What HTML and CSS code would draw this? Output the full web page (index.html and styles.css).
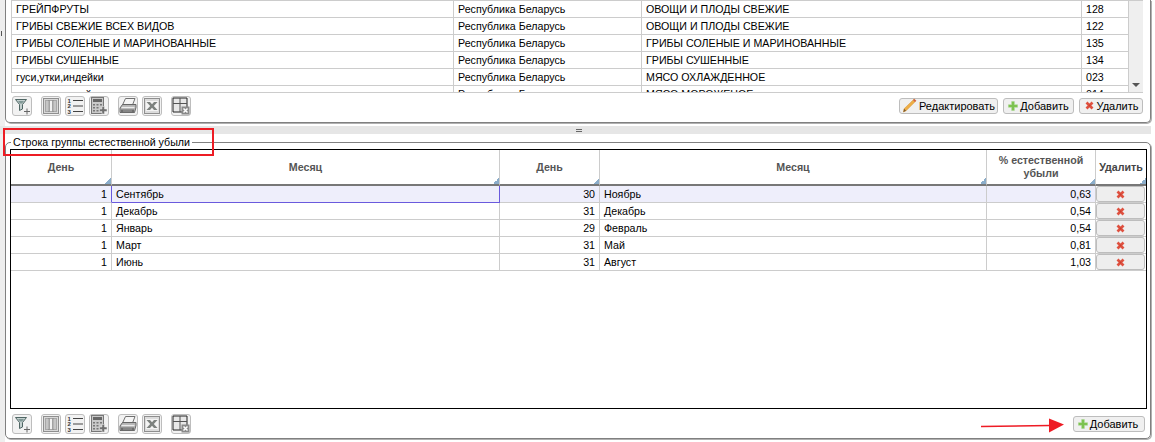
FILE: index.html
```html
<!DOCTYPE html>
<html lang="ru">
<head>
<meta charset="utf-8">
<title>Строка группы естественной убыли</title>
<link rel="stylesheet" href="styles.css">
</head>
<body>
<svg class="defs" xmlns="http://www.w3.org/2000/svg">
  <symbol id="i-filter" viewBox="0 0 18 18">
    <path d="M2.500 2.500h11l-4 5v4.500l-3 1.500V7.500z" fill="#c4d0cf" stroke="#4f6664" stroke-width="1"/>
    <path d="M5 4h6l-2 2.500H7z" fill="#7f9795"/>
    <path d="M11 14.500h6M14 11.500v6" stroke="#666" stroke-width="1"/>
  </symbol>
  <symbol id="i-cols" viewBox="0 0 18 18">
    <rect x="1.500" y="1.500" width="15" height="15" fill="#d9d9d9" stroke="#8f8f8f"/>
    <rect x="3.500" y="3.500" width="11" height="11" fill="#f2f2f2" stroke="#a8a8a8"/>
    <path d="M7 3.500v11M11 3.500v11" stroke="#6e6e6e" stroke-width="1.200"/>
    <rect x="4" y="4" width="2.500" height="10" fill="#c6c6c6"/>
    <rect x="11.500" y="4" width="2.500" height="10" fill="#c6c6c6"/>
  </symbol>
  <symbol id="i-list" viewBox="0 0 18 18">
    <text class="icon-digit" x="1.500" y="6">1</text>
    <text class="icon-digit" x="1.500" y="11">2</text>
    <text class="icon-digit" x="1.500" y="16.500">3</text>
    <path d="M7 3.500h10M7 9h10M7 14.500h10" stroke="#444" stroke-width="1"/>
  </symbol>
  <symbol id="i-calc" viewBox="0 0 18 18">
    <rect x="1.500" y="0.500" width="12" height="16" fill="#c9c9c9" stroke="#777"/>
    <rect x="3" y="2" width="9" height="3" fill="#666"/>
    <path d="M3 7h2v1.500H3zM6.500 7h2v1.500h-2zM10 7h2v1.500h-2zM3 10h2v1.500H3zM6.500 10h2v1.500h-2zM3 13h2v1.500H3zM6.500 13h2v1.500h-2z" fill="#777"/>
    <path d="M12 9.500h2.500V12H17v2.500h-2.500V17H12v-2.500H9.500V12H12z" fill="#6f6f6f" stroke="#eee" stroke-width=".5"/>
  </symbol>
  <symbol id="i-print" viewBox="0 0 18 18">
    <path d="M6.500 1.500h9.500l-2.500 6.500H3.500z" fill="#f5f5f5" stroke="#707070"/>
    <path d="M1 11l2.500-3.500h13.500v3l-1.500 5H1z" fill="#b5b5b5" stroke="#666"/>
    <path d="M2.500 10.500h13" stroke="#ececec" stroke-width="1.200"/>
    <rect x="2" y="12.500" width="13" height="3" fill="#6e6e6e"/>
    <rect x="4" y="13.500" width="9" height="1" fill="#9d9d9d"/>
  </symbol>
  <symbol id="i-excel" viewBox="0 0 18 18">
    <rect x="1.500" y="1.500" width="15" height="15" fill="#dcdcdc" stroke="#8f8f8f"/>
    <rect x="3" y="4" width="12" height="10" fill="#f4f4f4"/>
    <path d="M3.500 5h3.500l2 2.300L11 5h3.500l-3.700 4 3.700 4H11L9 10.700 7 13H3.500l3.700-4z" fill="#7d827f"/>
  </symbol>
  <symbol id="i-grid" viewBox="0 0 18 18">
    <path d="M1 1h14v14H1z" fill="#e8e8e8" stroke="#222" stroke-width="1"/>
    <path d="M1 6.500h14M8 1v14" stroke="#555" stroke-width="1"/>
    <rect x="9.500" y="9.500" width="8" height="8" fill="#8a8a8a"/>
    <path d="M11.500 11.500l4 4M15.500 11.500l-4 4" stroke="#fff" stroke-width="1.500"/>
  </symbol>
  <symbol id="i-pencil" viewBox="0 0 15 16">
    <path d="M1 15l.7-3.500L12.500 1 14.500 3 3.800 13.600z" fill="#eeae46" stroke="#d19030" stroke-width=".5"/>
    <path d="M12.500 1L14.500 3 13.300 4.200 11.300 2.200z" fill="#cf5a4a"/>
    <path d="M1 15l.7-3.500 2.100 2.100z" fill="#7a5a30"/>
  </symbol>
  <symbol id="i-plus" viewBox="0 0 11 11">
    <path d="M4 0.500h3v3.500h3.500v3H7v3.500H4V7H0.500V4H4z" fill="#7cc24e" stroke="#a5d68a" stroke-width=".5"/>
  </symbol>
  <symbol id="i-cross" viewBox="0 0 9 9">
    <path d="M1.500 1.500l6 6M7.500 1.500l-6 6" stroke="#df5140" stroke-width="2.700" stroke-linecap="butt" fill="none"/>
    <circle cx="4.500" cy="4.500" r="1" fill="#c9402f"/>
  </symbol>
</svg>

<div class="app">
  <div class="edge"><span class="edge-tick"></span></div>
  <main class="work">
    <section class="panel">
      <div class="grid-wrap">
        <div class="grid-clip">
          <table class="grid grid-top">
            <colgroup><col class="t1"><col class="t2"><col class="t3"><col class="t4"></colgroup>
            <tbody>
              <tr><td>ГРЕЙПФРУТЫ</td><td>Республика Беларусь</td><td>ОВОЩИ И ПЛОДЫ СВЕЖИЕ</td><td>128</td></tr>
              <tr><td>ГРИБЫ СВЕЖИЕ ВСЕХ ВИДОВ</td><td>Республика Беларусь</td><td>ОВОЩИ И ПЛОДЫ СВЕЖИЕ</td><td>122</td></tr>
              <tr><td>ГРИБЫ СОЛЕНЫЕ И МАРИНОВАННЫЕ</td><td>Республика Беларусь</td><td>ГРИБЫ СОЛЕНЫЕ И МАРИНОВАННЫЕ</td><td>135</td></tr>
              <tr><td>ГРИБЫ СУШЕННЫЕ</td><td>Республика Беларусь</td><td>ГРИБЫ СУШЕННЫЕ</td><td>134</td></tr>
              <tr><td>гуси,утки,индейки</td><td>Республика Беларусь</td><td>МЯСО ОХЛАЖДЕННОЕ</td><td>023</td></tr>
              <tr><td>утки домашней</td><td>Республика Беларусь</td><td>МЯСО МОРОЖЕНОЕ</td><td>014</td></tr>
            </tbody>
          </table>
        </div>
        <div class="scrollbar"><span class="scroll-down"></span></div>
      </div>
      <div class="toolbar">
        <div class="tools">
          <button class="tool"><svg class="tool-icon"><use href="#i-filter"/></svg></button>
          <button class="tool gap-l"><svg class="tool-icon"><use href="#i-cols"/></svg></button>
          <button class="tool"><svg class="tool-icon"><use href="#i-list"/></svg></button>
          <button class="tool"><svg class="tool-icon"><use href="#i-calc"/></svg></button>
          <button class="tool gap-l"><svg class="tool-icon"><use href="#i-print"/></svg></button>
          <button class="tool"><svg class="tool-icon"><use href="#i-excel"/></svg></button>
          <button class="tool gap-l"><svg class="tool-icon"><use href="#i-grid"/></svg></button>
        </div>
        <div class="actions">
          <button class="action action-edit"><svg class="a-pencil"><use href="#i-pencil"/></svg>Редактировать</button>
          <button class="action action-add"><svg class="a-plus"><use href="#i-plus"/></svg>Добавить</button>
          <button class="action action-del"><svg class="a-cross"><use href="#i-cross"/></svg>Удалить</button>
        </div>
      </div>
    </section>

    <div class="splitter"><span class="grip"></span></div>

    <fieldset class="group">
      <legend class="group-title">Строка группы естественной убыли</legend>
      <div class="detail">
        <table class="grid grid-detail">
          <colgroup><col class="d1"><col class="d2"><col class="d3"><col class="d4"><col class="d5"><col class="d6"></colgroup>
          <thead>
            <tr><th>День</th><th>Месяц</th><th>День</th><th>Месяц</th><th>% естественной убыли</th><th>Удалить</th></tr>
          </thead>
          <tbody>
            <tr class="selected"><td class="num focus-prev">1</td><td class="focus">Сентябрь</td><td class="num">30</td><td>Ноябрь</td><td class="num">0,63</td><td class="cell-btn"><button class="row-del"><svg class="a-cross"><use href="#i-cross"/></svg></button></td></tr>
            <tr><td class="num">1</td><td>Декабрь</td><td class="num">31</td><td>Декабрь</td><td class="num">0,54</td><td class="cell-btn"><button class="row-del"><svg class="a-cross"><use href="#i-cross"/></svg></button></td></tr>
            <tr><td class="num">1</td><td>Январь</td><td class="num">29</td><td>Февраль</td><td class="num">0,54</td><td class="cell-btn"><button class="row-del"><svg class="a-cross"><use href="#i-cross"/></svg></button></td></tr>
            <tr><td class="num">1</td><td>Март</td><td class="num">31</td><td>Май</td><td class="num">0,81</td><td class="cell-btn"><button class="row-del"><svg class="a-cross"><use href="#i-cross"/></svg></button></td></tr>
            <tr><td class="num">1</td><td>Июнь</td><td class="num">31</td><td>Август</td><td class="num">1,03</td><td class="cell-btn"><button class="row-del"><svg class="a-cross"><use href="#i-cross"/></svg></button></td></tr>
          </tbody>
        </table>
      </div>
      <div class="toolbar toolbar-bottom">
        <div class="tools">
          <button class="tool"><svg class="tool-icon"><use href="#i-filter"/></svg></button>
          <button class="tool gap-l"><svg class="tool-icon"><use href="#i-cols"/></svg></button>
          <button class="tool"><svg class="tool-icon"><use href="#i-list"/></svg></button>
          <button class="tool"><svg class="tool-icon"><use href="#i-calc"/></svg></button>
          <button class="tool gap-l"><svg class="tool-icon"><use href="#i-print"/></svg></button>
          <button class="tool"><svg class="tool-icon"><use href="#i-excel"/></svg></button>
          <button class="tool gap-l"><svg class="tool-icon"><use href="#i-grid"/></svg></button>
        </div>
        <div class="actions">
          <button class="action action-add-b"><svg class="a-plus"><use href="#i-plus"/></svg>Добавить</button>
        </div>
      </div>
    </fieldset>
  </main>
</div>

<div class="note-box"></div>
<svg class="note-arrow" viewBox="0 0 90 18" xmlns="http://www.w3.org/2000/svg">
  <path d="M1 9.500L70 8.500" stroke="#ee1c25" stroke-width="1.600" fill="none"/>
  <path d="M69 1.500L84 7.500 69 15.500z" fill="#ee1c25"/>
</svg>
</body>
</html>
```
FILE: styles.css
```css
* { box-sizing: border-box; }

html, body {
  margin: 0;
  height: 442px;
  overflow: hidden;
  background: #fff;
}

body {
  font-family: "Liberation Sans", Arial, sans-serif;
  font-size: 8pt;
  color: #000;
}

.defs { display: none; }

.app {
  display: flex;
  height: 442px;
}

.edge {
  flex: 0 0 5px;
  background: #eeeeee;
  padding-top: 31px;
}

.edge-tick {
  display: block;
  width: 1px;
  height: 5px;
  margin-left: 1px;
  background: #555;
}

.work {
  flex: 0 0 1146px;
  display: flex;
  flex-direction: column;
}

/* top panel */
.panel {
  height: 123px;
  border: 1px solid #808080;
  border-top: 0;
  border-radius: 0 0 5px 5px;
  box-shadow: 1px 1px 0 #b0b0b0;
  padding: 0 5px 0 5px;
  display: flex;
  flex-direction: column;
}

.grid-wrap {
  display: flex;
  height: 93px;
  border-bottom: 1px solid #ccc;
  border-top: 1px solid #ccc;
  margin-right: 2px;
}

.grid-clip {
  flex: 0 0 1118px;
  overflow: hidden;
  border-left: 1px solid #ccc;
}

.grid {
  border-collapse: separate;
  border-spacing: 0;
  table-layout: fixed;
}

.grid-top { width: 1117px; }

.t1 { width: 442px; }
.t2 { width: 188px; }
.t3 { width: 440px; }
.t4 { width: 47px; }

.grid td {
  height: 17px;
  padding: 0 4px;
  border-right: 1px solid #ccc;
  border-bottom: 1px solid #ccc;
  white-space: nowrap;
  overflow: hidden;
  line-height: 16px;
  font-size: 8pt;
}

.scrollbar {
  flex: 1;
  background: #efefef;
  display: flex;
  align-items: flex-end;
  justify-content: center;
  padding-bottom: 5px;
}

.scroll-down {
  width: 0;
  height: 0;
  border-left: 4px solid transparent;
  border-right: 4px solid transparent;
  border-top: 4px solid #555;
}

/* toolbars */
.toolbar {
  display: flex;
  justify-content: space-between;
  align-items: center;
  height: 29px;
  padding: 0 2px 4px 1px;
}

.tools {
  display: flex;
  gap: 4px;
  align-items: center;
}

.tool {
  width: 20px;
  height: 20px;
  padding: 0;
  display: flex;
  align-items: center;
  justify-content: center;
  background: #f2f2f2;
  border: 1px solid #bdbdbd;
  border-radius: 3px;
}

.gap-l { margin-left: 5px; }

.tool-icon {
  width: 18px;
  height: 18px;
}

.icon-digit {
  font-family: "Liberation Sans", sans-serif;
  font-size: 6px;
  font-weight: bold;
  fill: #333;
}

.actions {
  display: flex;
  gap: 5px;
}

.action {
  height: 16px;
  padding: 0;
  display: flex;
  align-items: center;
  justify-content: center;
  gap: 2px;
  font-family: "Liberation Sans", Arial, sans-serif;
  font-size: 11px;
  color: #000;
  background: #f0f0f0;
  border: 1px solid #bdbdbd;
  border-radius: 3px;
}

.action-edit { width: 99px; }
.action-add { width: 71px; }
.action-del { width: 64px; gap: 3px; padding-left: 1px; }
.action-add-b { width: 72px; padding-right: 2px; }

.a-pencil { width: 15px; height: 15px; }
.a-plus { width: 10px; height: 10px; }
.a-cross { width: 9px; height: 9px; }

/* splitter */
.splitter {
  height: 8px;
  margin: 3px 0 0 -5px;
  background: #e6e6e6;
  display: flex;
  justify-content: center;
  align-items: center;
  padding-left: 7px;
}

.grip {
  width: 6px;
  height: 3px;
  border-top: 1px solid #666;
  border-bottom: 1px solid #666;
}

/* lower group */
.group {
  margin: 2px 0 0;
  padding: 0 3px 0 4px;
  min-width: 0;
  width: 1146px;
  height: 303px;
  border: 1px solid #808080;
  border-radius: 5px;
  box-shadow: 1px 1px 0 #b0b0b0;
}

.group-title {
  margin-left: 1px;
  padding: 0 2px;
  font-size: 8pt;
  line-height: 13px;
  color: #000;
}

.detail {
  height: 260px;
  border: 1px solid #000;
}

.grid-detail { width: 1135px; }

.d1 { width: 101px; }
.d2 { width: 388px; }
.d3 { width: 100px; }
.d4 { width: 387px; }
.d5 { width: 109px; }
.d6 { width: 50px; }

.grid th {
  height: 36px;
  padding: 0 4px;
  text-align: center;
  font-size: 8pt;
  line-height: 13px;
  font-weight: bold;
  color: #555;
  border-right: 1px solid #ccc;
  border-bottom: 2px solid #777;
  background: linear-gradient(135deg, transparent 50%, #8badca 50%) right bottom / 6px 6px no-repeat;
}

.grid th:last-child {
  border-right: 0;
  padding: 0;
  color: #444;
}

.grid td.num { text-align: right; }

.grid .selected td { background: #eeeefb; }

.grid .selected td.focus-prev { border-right-color: #6a5add; }

.grid .selected td.focus {
  border-right-color: #6a5add;
  border-bottom-color: #6a5add;
}

.grid td.cell-btn {
  padding: 0;
  border-right: 0;
}

.grid .selected td.cell-btn { background: #fff; }

.row-del {
  display: flex;
  align-items: center;
  justify-content: center;
  width: 49px;
  height: 16px;
  padding: 0;
  background: #eeeeee;
  border: 1px solid #bdbdbd;
  border-radius: 3px;
}

.toolbar-bottom {
  height: 29px;
  padding: 4px 2px 4px 2px;
}

/* annotations drawn over the screenshot */
.note-box {
  position: absolute;
  left: 3px;
  top: 128px;
  width: 211px;
  height: 28px;
  border: 2px solid #ed1c24;
}

.note-arrow {
  position: absolute;
  left: 980px;
  top: 417px;
  width: 90px;
  height: 18px;
}
```
